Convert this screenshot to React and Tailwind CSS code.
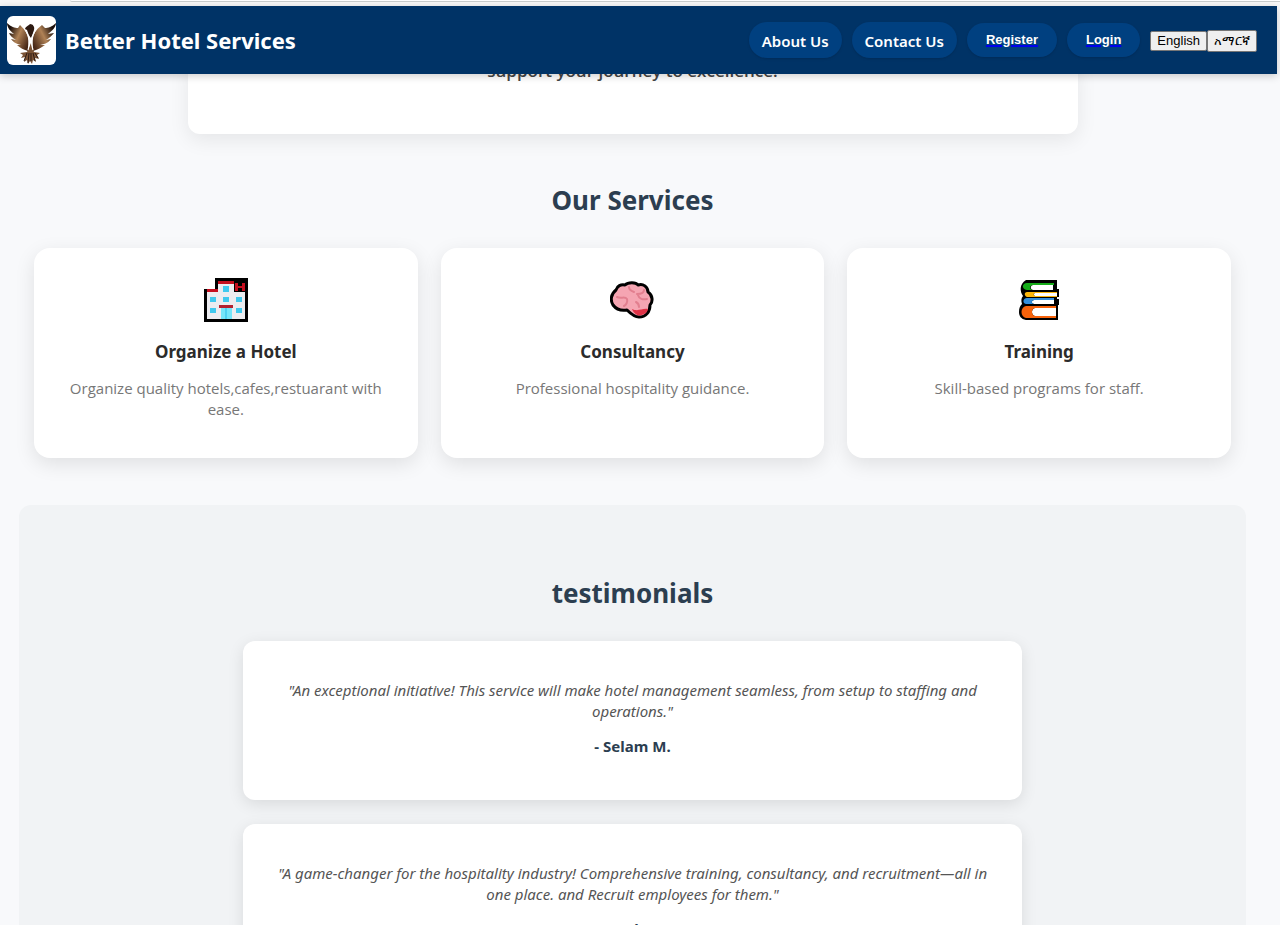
const services = [
  { icon: HotelIcon, title: "Organize a Hotel", text: "Organize quality hotels,cafes,restuarant with ease." },
  { icon: BrainIcon, title: "Consultancy", text: "Professional hospitality guidance." },
  { icon: BooksIcon, title: "Training", text: "Skill-based programs for staff." },
];

const testimonials = [
  {
    quote:
      '"An exceptional initiative! This service will make hotel management seamless, from setup to staffing and operations."',
    author: "- Selam M.",
  },
  {
    quote:
      '"A game-changer for the hospitality industry! Comprehensive training, consultancy, and recruitment—all in one place. and Recruit employees for them."',
    author: "- Eyob M.",
  },
];

function EagleLogo() {
  return (
    <svg viewBox="0 0 49 49" className="size-[49px] shrink-0 rounded-md bg-white" role="img" aria-label="Eagle logo">
      <defs>
        <linearGradient id="wingLeft" x1="0" y1="0.1" x2="1" y2="0.7">
          <stop offset="0.15" stopColor="#1c0f0a" />
          <stop offset="0.55" stopColor="#b08256" />
          <stop offset="1" stopColor="#4a2a18" />
        </linearGradient>
        <linearGradient id="wingRight" x1="1" y1="0.1" x2="0" y2="0.7">
          <stop offset="0.15" stopColor="#1c0f0a" />
          <stop offset="0.55" stopColor="#b08256" />
          <stop offset="1" stopColor="#4a2a18" />
        </linearGradient>
      </defs>
      <path fill="url(#wingLeft)" d="M0 7C4 11 8 12 11 12L13 9C16 12 20 16 21 22C22 26 21 30 21 35C17 34 13 32 10 29L14 29C9 28 6 26 4 23L9 24C5 22 3 19 2 17L7 18C3 15 0 11 0 7Z" />
      <path fill="url(#wingRight)" d="M49 7C45 11 41 12 38 12L35 9C31 12 27 16 26 22C25 26 26 30 26 35C30 34 34 32 38 29L33 29C39 28 42 26 44 23L39 24C43 22 45 19 47 17L41 18C45 15 49 11 49 7Z" />
      <path fill="#2c1911" d="M18 13C19 10 21 10 23 8C26 8 28 11 27 14C26 17 25 20 24 22C22 20 21 17 20 14Z" />
      <path fill="#7a5234" d="M24 27L27 36L33 37L30 39L32 43L28 42L29 46L26 44L25 48L23 45L21 48L20 44L17 46L18 41L14 42L16 39L13 37L20 36Z" />
      <path fill="none" stroke="#2c1911" strokeWidth="1" d="M20 37L17 45M22 37L21 47M24 37V45M26 37L28 45M28 37L31 42" />
      <path fill="none" stroke="#fff" strokeWidth="1.2" d="M19 15C22 20 24 26 21 34M28 15C25 20 23 26 26 34" />
    </svg>
  );
}

function HotelIcon() {
  return (
    <svg viewBox="0 0 44 44" className="size-11" aria-hidden="true">
      <path d="M0 11H11V0H44V44H0Z" />
      <path fill="#ececf0" d="M3 14H14V5H30V14H41V41H3Z" />
      <path fill="#c50f1f" d="M3 11H14V14H3ZM14 3H30V6H14ZM31 5H34V8H38V5H41V13H38V10H34V13H31Z" />
      <path fill="#b3202f" d="M15 27H29V30H15Z" />
      <path fill="#40c8ee" d="M19 8H25V14H19ZM6 19H12V24H6ZM19 19H25V24H19ZM32 19H38V24H32ZM6 30H12V35H6ZM32 30H38V35H32Z" />
      <path fill="#75e5fa" d="M17 30H28V41H17Z" />
      <path stroke="#27bce9" d="M22 30V41" />
    </svg>
  );
}

function BrainIcon() {
  return (
    <svg viewBox="0 0 44 38" className="h-[38px] w-11" aria-hidden="true">
      <path
        fill="#f5a5b2"
        stroke="#000"
        strokeWidth="3"
        strokeLinejoin="round"
        d="M6 9C7 5 11 3 15 4C18 1 26 1 28 4C33 2 38 6 38 11C43 14 43 21 40 24C40 31 36 36 29 36C24 36 20 32 17 29C11 30 6 28 3 24C0 19 1 13 6 9Z"
      />
      <path fill="#df3347" d="M22 28C28 31 32 27 38 28C37 32 34 34 29 34.500C26 34 23 31 22 28Z" />
      <path fill="none" stroke="#e27f8f" strokeWidth="2" strokeLinecap="round" d="M7 16C11 18 15 15 17 18C18 21 16 24 14 25M19 6C19 9 21 10 24 11M34 9C34 12 31 13 27 13M28 14C29 18 33 19 37 18M26 21C28 22 29 24 29 26" />
    </svg>
  );
}

function BooksIcon() {
  return (
    <svg viewBox="0 0 40 40" className="size-10" aria-hidden="true">
      <path d="M7 0H38V9H40V17H38V19H40V25H39V40H7C2 39 0 36 0 32C0 28 1 26 3 24C2 21 2 18 4 16C1 12 0 4 7 0Z" />
      <path fill="#16ac19" d="M8 3H35V5H14C10 6 10 9 14 10H8C2 9 3 3 8 3Z" />
      <path fill="#fff" d="M14 5H34V10H14C11 9 11 6 14 5ZM16 13H38V16H16C14 15 14 14 16 13ZM15 20H35V24H15C12 23 12 21 15 20ZM16 28H37V36H16C12 35 12 29 16 28Z" />
      <path fill="#fbb50b" d="M8 12H38V13H16C14 14 14 15 16 16H38V17H8C5 16 5 12 8 12Z" />
      <path fill="#338edb" d="M8 18H35V20H15C12 21 12 23 15 24H7C3 23 4 18 8 18Z" />
      <path fill="#f7630c" d="M7 26H37V28H16C12 29 12 35 16 36H37V38H7C1 37 1 27 7 26Z" />
    </svg>
  );
}

function NavLink({ children }) {
  return (
    <a href="#" className="rounded-full bg-[#004080] px-[13px] pt-[9px] pb-[7px] text-[15px] leading-5 font-semibold text-white shadow-sm">
      {children}
    </a>
  );
}

function NavButton({ children }) {
  return (
    <button type="button" className="rounded-full bg-[#004080] px-[19px] py-2 font-['Liberation_Sans',sans-serif] text-[13px] leading-[18px] font-bold text-white shadow-sm">
      <span className="underline decoration-[#0000ee] decoration-2">{children}</span>
    </button>
  );
}

function LanguageButton({ children, lang }) {
  return (
    <button type="button" lang={lang} className="rounded-[2px] border border-[#767676] bg-[#efefef] px-1.5 font-['Liberation_Sans',sans-serif] text-[13px] leading-[18px] text-black [&:lang(am)]:leading-5">
      {children}
    </button>
  );
}

export default function App() {
  return (
    <div className="h-screen overflow-hidden bg-[#f8f9fb] font-['Noto_Sans','Open_Sans',sans-serif] text-[#333]">
      <div className="h-1.5 bg-[#f8f8f8]">
        <div className="ml-[70px] h-0.5 rounded-bl-lg border-b border-[#c9cdcd] bg-white" />
      </div>
      <header className="relative z-10 mr-[3px] flex h-[68px] items-center justify-between bg-[#003366] pr-5 pl-[7px] shadow-[0_2px_8px_rgba(0,0,0,0.2)]">
        <div className="flex items-center gap-[9px]">
          <EagleLogo />
          <span className="text-[22px] leading-8 font-bold text-white">Better Hotel Services</span>
        </div>
        <nav className="flex items-center gap-2.5">
          <NavLink>About Us</NavLink>
          <NavLink>Contact Us</NavLink>
          <NavButton>Register</NavButton>
          <NavButton>Login</NavButton>
          <div className="flex items-center pt-px">
            <LanguageButton lang="en">English</LanguageButton>
            <LanguageButton lang="am">አማርኛ</LanguageButton>
          </div>
        </nav>
      </header>

      <main className="pr-[34px] pl-[19px]">
        <section className="mx-auto -mt-[15px] max-w-[890px] rounded-xl bg-white pb-[51px] text-center shadow-[0_6px_20px_rgba(0,0,0,0.08)]">
          <p className="font-['Open_Sans',sans-serif] text-[17px] leading-6 font-semibold text-[#444]">support your journey to excellence!</p>
        </section>

        <section className="px-[15px] pt-12 pb-[47px]">
          <h2 className="text-center text-[26px] leading-9 font-bold text-[#2c3e50]">Our Services</h2>
          <div className="mt-[30px] grid grid-cols-3 gap-[23px]">
            {services.map(({ icon: Icon, title, text }) => (
              <article key={title} className="flex min-h-[210px] flex-col items-center rounded-2xl bg-white px-7 pt-[30px] pb-9 text-center shadow-[0_6px_20px_rgba(0,0,0,0.1)]">
                <div className="flex h-11 items-center">
                  <Icon />
                </div>
                <h3 className="mt-4 text-[17px] leading-7 font-bold text-[#2b2b2b]">{title}</h3>
                <p className="mt-3 font-['Open_Sans',sans-serif] text-[15px] leading-[21px] text-[#777]">{text}</p>
              </article>
            ))}
          </div>
        </section>

        <section className="rounded-xl bg-[#f1f3f5] px-6 pt-[70px] pb-16">
          <h2 className="text-center text-[26px] leading-9 font-bold text-[#2c3e50]">testimonials</h2>
          <div className="mx-auto mt-[30px] flex max-w-[779px] flex-col gap-6">
            {testimonials.map(({ quote, author }) => (
              <figure key={author} className="rounded-xl bg-white px-7 pt-[39px] pb-11 text-center shadow-[0_4px_16px_rgba(0,0,0,0.1)]">
                <blockquote className="text-[15px] leading-[21px] text-[#555] italic">{quote}</blockquote>
                <figcaption className="mt-3.5 text-[15px] leading-5 font-bold text-[#2c3e50]">{author}</figcaption>
              </figure>
            ))}
          </div>
        </section>
      </main>
    </div>
  );
}
